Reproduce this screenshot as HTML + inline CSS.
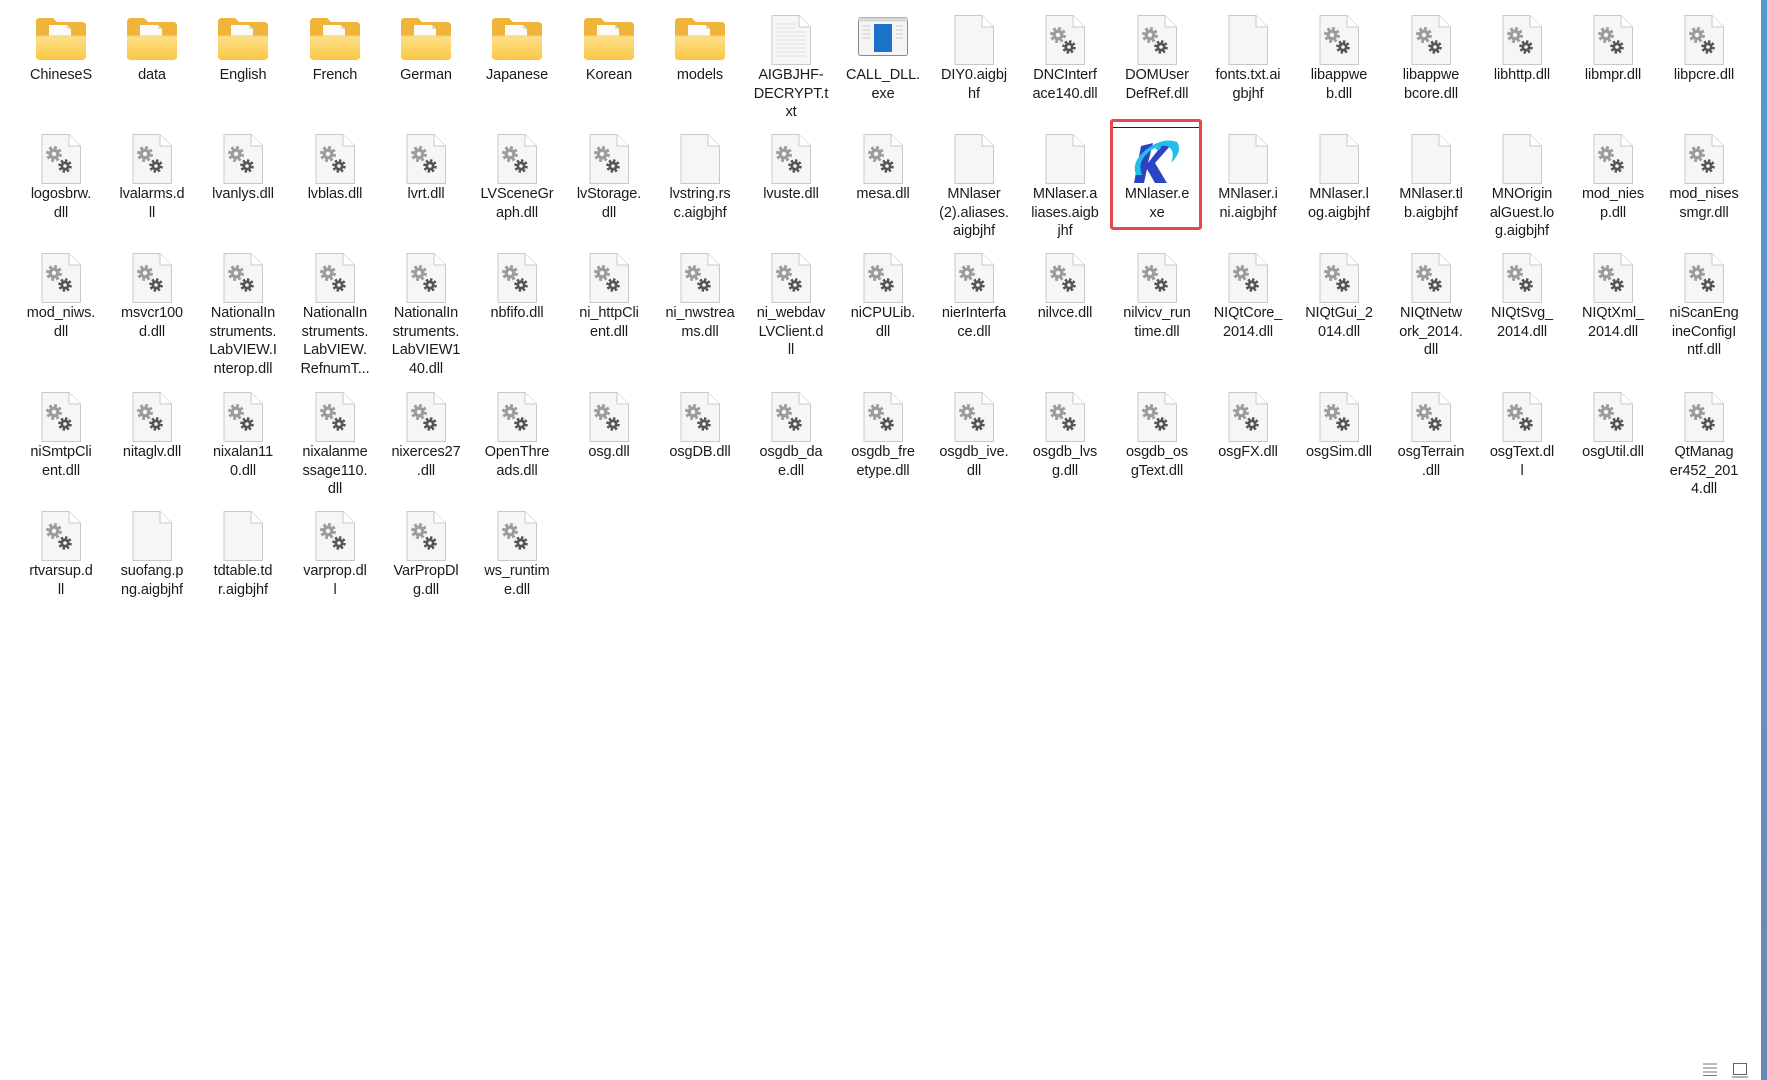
<!DOCTYPE html>
<html><head><meta charset="utf-8"><style>
body{margin:0;width:1767px;height:1080px;background:#fff;position:relative;overflow:hidden;font-family:"Liberation Sans","Noto Sans CJK SC",sans-serif;}
.c{position:absolute;width:90px;text-align:center}
.c svg{display:block;margin:0 auto;width:52px;height:52px}
.c p{margin:0;font-size:14.5px;line-height:18.6px;color:#1a1a1a;white-space:nowrap;letter-spacing:-0.1px}
.r1{top:14px}.r2{top:133px}.r3{top:252px}.r4{top:391px}.r5{top:510px}
#sel{position:absolute;left:1110px;top:119px;width:86px;height:105px;border:3px solid #e8484c;border-radius:3px}
#strip{position:absolute;left:1761px;top:0;width:6px;height:1080px;background:linear-gradient(#4f9bd2,#6a8fc0 60%,#6c86b3)}
</style></head><body>
<svg width="0" height="0" style="position:absolute">
<defs>
<linearGradient id="fg" x1="0" y1="0" x2="0" y2="1"><stop offset="0" stop-color="#fde08a"/><stop offset="1" stop-color="#f9c744"/></linearGradient>
<symbol id="f" viewBox="0 0 52 52"><path d="M1,8 Q1,4 5,4 H18 L22,8 H47 Q51,8 51,12 V44 H1Z" fill="#efb43a"/><path d="M14,11 H32 L36,15 V30 H14Z" fill="#fafafa"/><path d="M32,11 V15 H36" fill="#ddd"/><path d="M1,22 H51 V42 Q51,46 47,46 H5 Q1,46 1,42Z" fill="url(#fg)"/><path d="M1,22 H51" stroke="#f6d27a"/></symbol>
<symbol id="b" viewBox="0 0 52 52"><path d="M7,1.5 H34 L45.5,13 V50.5 H7Z" fill="#f6f6f6" stroke="#c9c9c9"/><path d="M34,1.5 V13 H45.5" fill="#fff" stroke="#c9c9c9"/></symbol>
<symbol id="g" viewBox="0 0 52 52"><use href="#b"/><circle cx="19" cy="21" r="6" fill="none" stroke="#9c9c9c" stroke-width="4" stroke-dasharray="2.6 2.1"/><circle cx="19" cy="21" r="5.5" fill="#9c9c9c"/><circle cx="19" cy="21" r="2.2" fill="#f6f6f6"/><circle cx="30" cy="33" r="5" fill="none" stroke="#555" stroke-width="3.6" stroke-dasharray="2.2 1.7"/><circle cx="30" cy="33" r="4.6" fill="#555"/><circle cx="30" cy="33" r="1.8" fill="#f6f6f6"/></symbol>
<symbol id="t" viewBox="0 0 52 52"><use href="#b"/><g stroke="#ddd"><path d="M11,10H31M11,14H31M11,18H41M11,22H41M11,26H41M11,30H41M11,34H41M11,38H41M11,42H41"/></g></symbol>
</defs></svg>

<div class="c r1" style="left:16px"><svg><use href="#f"/></svg><p>ChineseS</p></div>
<div class="c r1" style="left:107px"><svg><use href="#f"/></svg><p>data</p></div>
<div class="c r1" style="left:198px"><svg><use href="#f"/></svg><p>English</p></div>
<div class="c r1" style="left:290px"><svg><use href="#f"/></svg><p>French</p></div>
<div class="c r1" style="left:381px"><svg><use href="#f"/></svg><p>German</p></div>
<div class="c r1" style="left:472px"><svg><use href="#f"/></svg><p>Japanese</p></div>
<div class="c r1" style="left:564px"><svg><use href="#f"/></svg><p>Korean</p></div>
<div class="c r1" style="left:655px"><svg><use href="#f"/></svg><p>models</p></div>
<div class="c r1" style="left:746px"><svg><use href="#t"/></svg><p>AIGBJHF-<br>DECRYPT.t<br>xt</p></div>
<div class="c r1" style="left:838px"><svg viewBox="0 0 52 52"><rect x="1.5" y="3.5" width="49" height="38" rx="2" fill="#f4f4f4" stroke="#8a8a8a"/><rect x="1.5" y="3.5" width="49" height="4" fill="#d8d8d8"/><rect x="17" y="10" width="18" height="28" fill="#1a73c8"/><g stroke="#ccc"><path d="M6,12H13M6,16H13M6,20H13M6,24H13M39,12H46M39,16H46M39,20H46M39,24H46"/></g></svg><p>CALL_DLL.<br>exe</p></div>
<div class="c r1" style="left:929px"><svg><use href="#b"/></svg><p>DIY0.aigbj<br>hf</p></div>
<div class="c r1" style="left:1020px"><svg><use href="#g"/></svg><p>DNCInterf<br>ace140.dll</p></div>
<div class="c r1" style="left:1112px"><svg><use href="#g"/></svg><p>DOMUser<br>DefRef.dll</p></div>
<div class="c r1" style="left:1203px"><svg><use href="#b"/></svg><p>fonts.txt.ai<br>gbjhf</p></div>
<div class="c r1" style="left:1294px"><svg><use href="#g"/></svg><p>libappwe<br>b.dll</p></div>
<div class="c r1" style="left:1386px"><svg><use href="#g"/></svg><p>libappwe<br>bcore.dll</p></div>
<div class="c r1" style="left:1477px"><svg><use href="#g"/></svg><p>libhttp.dll</p></div>
<div class="c r1" style="left:1568px"><svg><use href="#g"/></svg><p>libmpr.dll</p></div>
<div class="c r1" style="left:1659px"><svg><use href="#g"/></svg><p>libpcre.dll</p></div>

<div class="c r2" style="left:16px"><svg><use href="#g"/></svg><p>logosbrw.<br>dll</p></div>
<div class="c r2" style="left:107px"><svg><use href="#g"/></svg><p>lvalarms.d<br>ll</p></div>
<div class="c r2" style="left:198px"><svg><use href="#g"/></svg><p>lvanlys.dll</p></div>
<div class="c r2" style="left:290px"><svg><use href="#g"/></svg><p>lvblas.dll</p></div>
<div class="c r2" style="left:381px"><svg><use href="#g"/></svg><p>lvrt.dll</p></div>
<div class="c r2" style="left:472px"><svg><use href="#g"/></svg><p>LVSceneGr<br>aph.dll</p></div>
<div class="c r2" style="left:564px"><svg><use href="#g"/></svg><p>lvStorage.<br>dll</p></div>
<div class="c r2" style="left:655px"><svg><use href="#b"/></svg><p>lvstring.rs<br>c.aigbjhf</p></div>
<div class="c r2" style="left:746px"><svg><use href="#g"/></svg><p>lvuste.dll</p></div>
<div class="c r2" style="left:838px"><svg><use href="#g"/></svg><p>mesa.dll</p></div>
<div class="c r2" style="left:929px"><svg><use href="#b"/></svg><p>MNlaser<br>(2).aliases.<br>aigbjhf</p></div>
<div class="c r2" style="left:1020px"><svg><use href="#b"/></svg><p>MNlaser.a<br>liases.aigb<br>jhf</p></div>
<div id="sel"></div>
<div style="position:absolute;left:1113px;top:127px;width:86px;height:1px;background:#222"></div>
<div class="c r2" style="left:1112px"><svg viewBox="0 0 52 52"><path d="M10,13 L22,10 L17,30 L31,12 L40,12 L24,30 L36,50 L24,50 L16,36 L13,50 L3,50Z" fill="#2a44c4"/><path d="M5,42 Q0,28 16,16 Q32,4 46,9 Q52,18 40,30 Q45,17 36,13 Q24,11 13,24 Q7,32 11,42Z" fill="#22bfe8"/><circle cx="27" cy="14" r="3" fill="#22bfe8"/></svg><p>MNlaser.e<br>xe</p></div>
<div class="c r2" style="left:1203px"><svg><use href="#b"/></svg><p>MNlaser.i<br>ni.aigbjhf</p></div>
<div class="c r2" style="left:1294px"><svg><use href="#b"/></svg><p>MNlaser.l<br>og.aigbjhf</p></div>
<div class="c r2" style="left:1386px"><svg><use href="#b"/></svg><p>MNlaser.tl<br>b.aigbjhf</p></div>
<div class="c r2" style="left:1477px"><svg><use href="#b"/></svg><p>MNOrigin<br>alGuest.lo<br>g.aigbjhf</p></div>
<div class="c r2" style="left:1568px"><svg><use href="#g"/></svg><p>mod_nies<br>p.dll</p></div>
<div class="c r2" style="left:1659px"><svg><use href="#g"/></svg><p>mod_nises<br>smgr.dll</p></div>

<div class="c r3" style="left:16px"><svg><use href="#g"/></svg><p>mod_niws.<br>dll</p></div>
<div class="c r3" style="left:107px"><svg><use href="#g"/></svg><p>msvcr100<br>d.dll</p></div>
<div class="c r3" style="left:198px"><svg><use href="#g"/></svg><p>NationalIn<br>struments.<br>LabVIEW.I<br>nterop.dll</p></div>
<div class="c r3" style="left:290px"><svg><use href="#g"/></svg><p>NationalIn<br>struments.<br>LabVIEW.<br>RefnumT...</p></div>
<div class="c r3" style="left:381px"><svg><use href="#g"/></svg><p>NationalIn<br>struments.<br>LabVIEW1<br>40.dll</p></div>
<div class="c r3" style="left:472px"><svg><use href="#g"/></svg><p>nbfifo.dll</p></div>
<div class="c r3" style="left:564px"><svg><use href="#g"/></svg><p>ni_httpCli<br>ent.dll</p></div>
<div class="c r3" style="left:655px"><svg><use href="#g"/></svg><p>ni_nwstrea<br>ms.dll</p></div>
<div class="c r3" style="left:746px"><svg><use href="#g"/></svg><p>ni_webdav<br>LVClient.d<br>ll</p></div>
<div class="c r3" style="left:838px"><svg><use href="#g"/></svg><p>niCPULib.<br>dll</p></div>
<div class="c r3" style="left:929px"><svg><use href="#g"/></svg><p>nierInterfa<br>ce.dll</p></div>
<div class="c r3" style="left:1020px"><svg><use href="#g"/></svg><p>nilvce.dll</p></div>
<div class="c r3" style="left:1112px"><svg><use href="#g"/></svg><p>nilvicv_run<br>time.dll</p></div>
<div class="c r3" style="left:1203px"><svg><use href="#g"/></svg><p>NIQtCore_<br>2014.dll</p></div>
<div class="c r3" style="left:1294px"><svg><use href="#g"/></svg><p>NIQtGui_2<br>014.dll</p></div>
<div class="c r3" style="left:1386px"><svg><use href="#g"/></svg><p>NIQtNetw<br>ork_2014.<br>dll</p></div>
<div class="c r3" style="left:1477px"><svg><use href="#g"/></svg><p>NIQtSvg_<br>2014.dll</p></div>
<div class="c r3" style="left:1568px"><svg><use href="#g"/></svg><p>NIQtXml_<br>2014.dll</p></div>
<div class="c r3" style="left:1659px"><svg><use href="#g"/></svg><p>niScanEng<br>ineConfigI<br>ntf.dll</p></div>

<div class="c r4" style="left:16px"><svg><use href="#g"/></svg><p>niSmtpCli<br>ent.dll</p></div>
<div class="c r4" style="left:107px"><svg><use href="#g"/></svg><p>nitaglv.dll</p></div>
<div class="c r4" style="left:198px"><svg><use href="#g"/></svg><p>nixalan11<br>0.dll</p></div>
<div class="c r4" style="left:290px"><svg><use href="#g"/></svg><p>nixalanme<br>ssage110.<br>dll</p></div>
<div class="c r4" style="left:381px"><svg><use href="#g"/></svg><p>nixerces27<br>.dll</p></div>
<div class="c r4" style="left:472px"><svg><use href="#g"/></svg><p>OpenThre<br>ads.dll</p></div>
<div class="c r4" style="left:564px"><svg><use href="#g"/></svg><p>osg.dll</p></div>
<div class="c r4" style="left:655px"><svg><use href="#g"/></svg><p>osgDB.dll</p></div>
<div class="c r4" style="left:746px"><svg><use href="#g"/></svg><p>osgdb_da<br>e.dll</p></div>
<div class="c r4" style="left:838px"><svg><use href="#g"/></svg><p>osgdb_fre<br>etype.dll</p></div>
<div class="c r4" style="left:929px"><svg><use href="#g"/></svg><p>osgdb_ive.<br>dll</p></div>
<div class="c r4" style="left:1020px"><svg><use href="#g"/></svg><p>osgdb_lvs<br>g.dll</p></div>
<div class="c r4" style="left:1112px"><svg><use href="#g"/></svg><p>osgdb_os<br>gText.dll</p></div>
<div class="c r4" style="left:1203px"><svg><use href="#g"/></svg><p>osgFX.dll</p></div>
<div class="c r4" style="left:1294px"><svg><use href="#g"/></svg><p>osgSim.dll</p></div>
<div class="c r4" style="left:1386px"><svg><use href="#g"/></svg><p>osgTerrain<br>.dll</p></div>
<div class="c r4" style="left:1477px"><svg><use href="#g"/></svg><p>osgText.dl<br>l</p></div>
<div class="c r4" style="left:1568px"><svg><use href="#g"/></svg><p>osgUtil.dll</p></div>
<div class="c r4" style="left:1659px"><svg><use href="#g"/></svg><p>QtManag<br>er452_201<br>4.dll</p></div>

<div class="c r5" style="left:16px"><svg><use href="#g"/></svg><p>rtvarsup.d<br>ll</p></div>
<div class="c r5" style="left:107px"><svg><use href="#b"/></svg><p>suofang.p<br>ng.aigbjhf</p></div>
<div class="c r5" style="left:198px"><svg><use href="#b"/></svg><p>tdtable.td<br>r.aigbjhf</p></div>
<div class="c r5" style="left:290px"><svg><use href="#g"/></svg><p>varprop.dl<br>l</p></div>
<div class="c r5" style="left:381px"><svg><use href="#g"/></svg><p>VarPropDl<br>g.dll</p></div>
<div class="c r5" style="left:472px"><svg><use href="#g"/></svg><p>ws_runtim<br>e.dll</p></div>

<svg style="position:absolute;left:1702px;top:1062px" width="16" height="14"><path d="M1,2H15M1,6H15M1,10H15M1,13.5H15" stroke="#777" stroke-width="1"/></svg>
<svg style="position:absolute;left:1732px;top:1062px" width="17" height="16"><rect x="1.5" y="1.5" width="13" height="11" fill="none" stroke="#666"/><path d="M0,15H16" stroke="#666"/></svg>
<div id="strip"></div>
</body></html>
